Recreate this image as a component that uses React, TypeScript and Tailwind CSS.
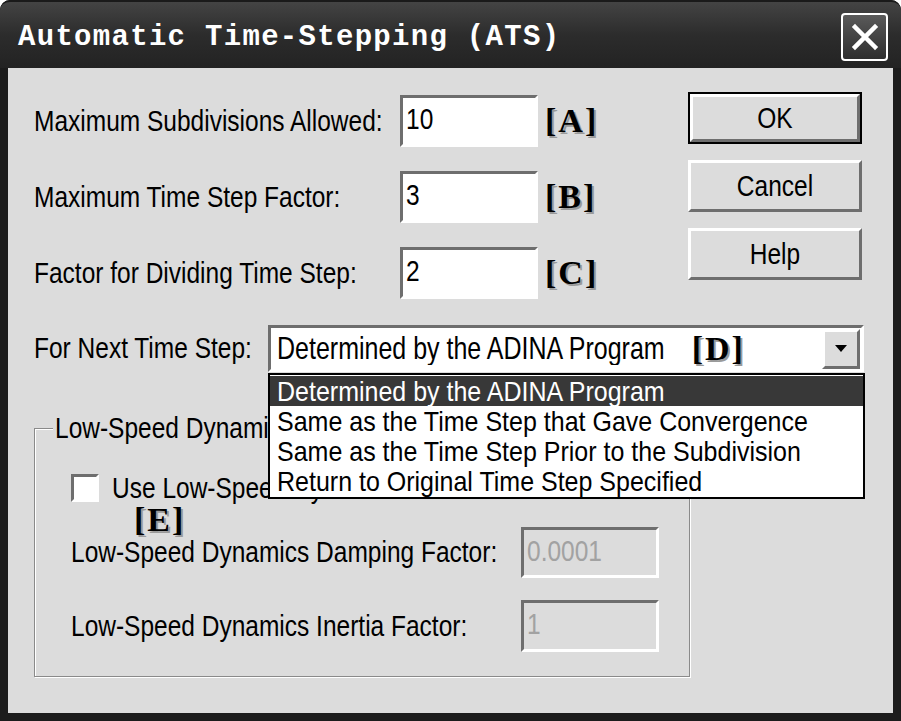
import React from 'react';

const sans = "font-['Liberation_Sans',Arial,sans-serif] text-[24.5px] leading-none";
const tag = "font-['Liberation_Serif','Times_New_Roman',serif] font-bold text-[34px] leading-none tracking-[2px] text-black [text-shadow:2px_2px_0_#9a9a9a]";
const sunken = 'border-[3px] border-t-[#6e6e6e] border-l-[#6e6e6e] border-b-white border-r-white';
const raised = 'border-[3px] border-t-white border-l-white border-b-[#6e6e6e] border-r-[#6e6e6e]';

// the dialog font is a tall bitmap face, so stretch the glyphs a little
const Txt = ({ children, className = 'scale-y-[1.22]' }: { children: React.ReactNode; className?: string }) => (
  <span className={`inline-block ${className}`}>{children}</span>
);

const Field = ({ value, disabled = false, className = '' }: { value: string; disabled?: boolean; className?: string }) => (
  <div
    className={`${sunken} ${disabled ? 'bg-[#dcdcdc] text-[#a2a2a2]' : 'bg-white text-black'} ${sans} flex w-[138px] items-start pl-[3px] pt-[9px] ${className}`}
  >
    <Txt>{value}</Txt>
  </div>
);

const Btn = ({ label, isDefault = false }: { label: string; isDefault?: boolean }) => (
  <div className={`h-[52px] w-[174px] ${isDefault ? 'border-2 border-black' : ''}`}>
    <div className={`${raised} ${sans} flex h-full w-full items-center justify-center bg-[#dcdcdc] text-black`}>
      <Txt>{label}</Txt>
    </div>
  </div>
);

const rows = [
  { label: 'Maximum Subdivisions Allowed:', value: '10', mark: '[A]' },
  { label: 'Maximum Time Step Factor:', value: '3', mark: '[B]' },
  { label: 'Factor for Dividing Time Step:', value: '2', mark: '[C]' },
];

const options = [
  'Determined by the ADINA Program',
  'Same as the Time Step that Gave Convergence',
  'Same as the Time Step Prior to the Subdivision',
  'Return to Original Time Step Specified',
];

export default function App() {
  return (
    <div className="h-[721px] w-[901px] bg-white">
      <div className="flex h-full flex-col rounded-t-[10px] bg-[#1c1c1c]">
        {/* title bar */}
        <div className="flex h-[68px] items-center justify-between rounded-t-[10px] border-t-2 border-[#1a1a1a] bg-gradient-to-b from-[#444444] via-[#2c2c2c] to-[#232323] pl-[18px] pr-[13px]">
          <span className="pt-[6px] font-['Liberation_Mono','Courier_New',monospace] text-[29px] font-bold tracking-[1.3px] text-white">
            Automatic Time-Stepping (ATS)
          </span>
          <div className="mt-[4px] flex h-[48px] w-[47px] items-center justify-center rounded-[4px] border-2 border-white bg-gradient-to-b from-[#5a5a5a] to-[#2e2e2e]">
            <svg width="30" height="30" viewBox="0 0 30 30">
              <path d="M5 5 L25 25 M25 5 L5 25" stroke="white" strokeWidth="4.5" strokeLinecap="square" />
            </svg>
          </div>
        </div>

        {/* dialog body */}
        <div className="relative mx-[8px] mb-[8px] flex-1 bg-[#dcdcdc] pl-[26px] pt-[24px]">
          <div className="flex">
            <div className="mt-[3px] flex w-[654px] flex-col gap-[24px]">
              {rows.map((row) => (
                <div key={row.label} className="flex items-center">
                  <span className={`${sans} w-[366px] text-black`}>
                    <Txt>{row.label}</Txt>
                  </span>
                  <Field value={row.value} className="h-[52px]" />
                  <span className={`${tag} ml-[7px]`}>{row.mark}</span>
                </div>
              ))}
            </div>
            <div className="flex flex-col gap-[16px]">
              <Btn label="OK" isDefault />
              <Btn label="Cancel" />
              <Btn label="Help" />
            </div>
          </div>

          <div className="mt-[26px] flex items-center">
            <span className={`${sans} w-[234px] text-black`}>
              <Txt>For Next Time Step:</Txt>
            </span>
            <div className={`${sunken} flex h-[47px] w-[596px] items-center bg-white pl-[6px]`}>
              <span className={`${sans} text-[25px] text-black`}>
                <Txt>Determined by the ADINA Program</Txt>
              </span>
              <span className={`${tag} ml-[27px]`}>[D]</span>
              <div className={`${raised} ml-auto mr-[1px] flex h-[40px] w-[38px] items-center justify-center bg-[#dcdcdc]`}>
                <svg width="12" height="7" viewBox="0 0 12 7">
                  <path d="M0 0 H12 L6 7 Z" fill="black" />
                </svg>
              </div>
            </div>
          </div>

          {/* group box */}
          <div className="relative mt-[56px] h-[249px] w-[656px] border border-[#8a8a8a] pl-[36px] pt-[45px] shadow-[1px_1px_0_white,inset_1px_1px_0_white]">
            <span className={`${sans} absolute left-[18px] top-[-13px] bg-[#dcdcdc] px-[2px] text-black`}>
              <Txt>Low-Speed Dynamics</Txt>
            </span>
            <div className="flex items-center">
              <div className={`${sunken} h-[28px] w-[28px] bg-white`} />
              <span className={`${sans} ml-[13px] text-black`}>
                <Txt>Use Low-Speed Dynamics</Txt>
              </span>
            </div>
            <span className={`${tag} absolute left-[99px] top-[74px]`}>[E]</span>
            <div className="mt-[25px] flex items-center">
              <span className={`${sans} w-[450px] text-black`}>
                <Txt>Low-Speed Dynamics Damping Factor:</Txt>
              </span>
              <Field value="0.0001" disabled className="h-[51px]" />
            </div>
            <div className="mt-[22px] flex items-center">
              <span className={`${sans} w-[450px] text-black`}>
                <Txt>Low-Speed Dynamics Inertia Factor:</Txt>
              </span>
              <Field value="1" disabled className="h-[52px]" />
            </div>
          </div>

          {/* open dropdown list */}
          <div className="absolute left-[260px] top-[305px] w-[597px] border-2 border-black bg-white py-[1px]">
            {options.map((opt, i) => (
              <div
                key={opt}
                className={`${sans} flex h-[30px] items-center pl-[7px] text-[25px] ${i === 0 ? 'bg-[#383838] text-white' : 'text-black'}`}
              >
                <Txt className="scale-y-[1.12]">{opt}</Txt>
              </div>
            ))}
          </div>
        </div>
      </div>
    </div>
  );
}
